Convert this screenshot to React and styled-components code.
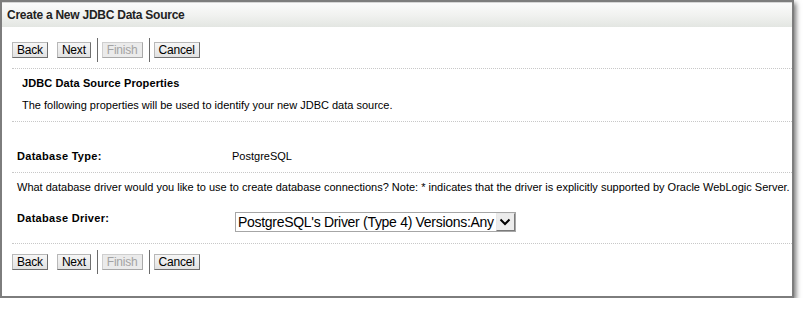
import styled, { createGlobalStyle } from "styled-components";

const Global = createGlobalStyle`
  html, body {
    margin: 0;
    padding: 0;
    background: #ffffff;
  }
  body {
    font-family: "Liberation Sans", Arial, sans-serif;
    font-size: 11px;
    color: #000;
  }
`;

export default function App() {
  return (
    <>
      <Global />
      <Frame>
        <Header>
          <Title>Create a New JDBC Data Source</Title>
        </Header>

        <Body>
          <WizardButtons />
          <Divider />

          <SectionTitle>JDBC Data Source Properties</SectionTitle>
          <Intro>
            The following properties will be used to identify your new JDBC data source.
          </Intro>
          <Divider />

          <FieldRow top="28px" bottom="9px">
            <Label>Database Type:</Label>
            <Value>PostgreSQL</Value>
          </FieldRow>
          <Divider />

          <Note>
            What database driver would you like to use to create database connections? Note: *
            indicates that the driver is explicitly supported by Oracle WebLogic Server.
          </Note>

          <FieldRow top="18px" bottom="11px">
            <Label>Database Driver:</Label>
            <SelectBox>
              <SelectText>PostgreSQL's Driver (Type 4) Versions:Any</SelectText>
              <DropButton>
                <svg width="12" height="8" viewBox="0 0 12 8">
                  <path d="M1.5 1.5 L6 6 L10.5 1.5" fill="none" stroke="#000" strokeWidth="2" />
                </svg>
              </DropButton>
            </SelectBox>
          </FieldRow>
          <Divider />

          <WizardButtons />
        </Body>
      </Frame>
    </>
  );
}

function WizardButtons() {
  return (
    <ButtonBar>
      <Button>Back</Button>
      <Button>Next</Button>
      <Separator />
      <Button disabled>Finish</Button>
      <Separator />
      <Button>Cancel</Button>
    </ButtonBar>
  );
}

const Frame = styled.div`
  box-sizing: border-box;
  width: 794px;
  height: 298px;
  border: 2px solid #7d7d7d;
  box-shadow: 2px 3px 5px rgba(0, 0, 0, 0.55);
  background: #fff;
  display: flex;
  flex-direction: column;
`;

const Header = styled.div`
  height: 24px;
  border-top: 1px solid #d6d6d6;
  background: linear-gradient(#fbfbfb 0%, #f1f2f0 50%, #e3e6e2 100%);
  display: flex;
  align-items: center;
  padding-left: 5px;
`;

const Title = styled.div`
  font-weight: bold;
  font-size: 12px;
  letter-spacing: -0.25px;
  color: #222;
`;

const Body = styled.div`
  padding-left: 10px;
  display: flex;
  flex-direction: column;
`;

const ButtonBar = styled.div`
  display: flex;
  align-items: center;
  height: 24px;
  margin-top: 11px;
  margin-bottom: 6px;

  hr + & {
    margin-top: 6px;
  }
`;

const Button = styled.button`
  box-sizing: border-box;
  height: 16px;
  padding: 0 4px;
  margin: 0 9px 0 0;
  font-family: "Liberation Sans", Arial, sans-serif;
  font-size: 12px;
  letter-spacing: -0.2px;
  line-height: 14px;
  color: #000;
  background: linear-gradient(#f6f6f6, #e2e2e2);
  border: 1px solid;
  border-color: #b8b8b8 #6f6f6f #6f6f6f #b8b8b8;
  border-radius: 0;

  &:disabled {
    color: #a3a3a3;
    background: #ebebeb;
    border-color: #cfcfcf #a9a9a9 #a9a9a9 #cfcfcf;
  }
`;

const Separator = styled.div`
  width: 1px;
  height: 24px;
  background: #6b6b6b;
  margin: 0 4px 0 -3px;
`;

const Divider = styled.hr`
  height: 0;
  margin: 0;
  border: none;
  border-top: 1px dotted #c8c8c8;
`;

const SectionTitle = styled.div`
  padding-left: 10px;
  margin-top: 8px;
  font-weight: bold;
  letter-spacing: 0.1px;
  line-height: 13px;
`;

const Intro = styled.div`
  padding-left: 10px;
  margin-top: 9px;
  margin-bottom: 9px;
  line-height: 13px;
`;

const FieldRow = styled.div`
  display: grid;
  grid-template-columns: 215px auto;
  align-items: start;
  padding-left: 5px;
  margin-top: ${({ top }) => top};
  margin-bottom: ${({ bottom }) => bottom};
`;

const Label = styled.div`
  font-weight: bold;
  letter-spacing: 0.3px;
  line-height: 13px;
`;

const Value = styled.div`
  line-height: 13px;
`;

const Note = styled.div`
  padding-left: 5px;
  margin-top: 8px;
  line-height: 13px;
  white-space: nowrap;
`;

const SelectBox = styled.div`
  justify-self: start;
  margin-left: 3px;
  display: flex;
  align-items: stretch;
  height: 20px;
  box-sizing: border-box;
  border: 1px solid #a6a6a6;
  background: #fff;
`;

const SelectText = styled.div`
  font-size: 14px;
  letter-spacing: -0.3px;
  line-height: 18px;
  padding: 0 2px 0 2px;
  white-space: nowrap;
`;

const DropButton = styled.div`
  box-sizing: border-box;
  width: 19px;
  border: 1px solid;
  border-color: #e8e8e8 #7a7a7a #7a7a7a #e8e8e8;
  background: #ececec;
  display: flex;
  align-items: center;
  justify-content: center;
`;
